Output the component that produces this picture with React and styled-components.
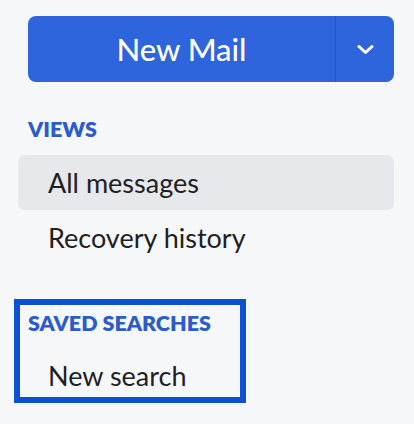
import React from 'react'
import styled, { createGlobalStyle } from 'styled-components'

const GlobalStyle = createGlobalStyle`
  html, body {
    margin: 0;
    padding: 0;
    background: #f6f7f9;
  }
  body {
    font-family: Lato, "Noto Sans", "Liberation Sans", sans-serif;
    color: #1f1f24;
  }
`

const Sidebar = styled.nav`
  display: flex;
  flex-direction: column;
  padding: 16px 20px 0 28px;
  width: 414px;
  box-sizing: border-box;
`

const SplitButton = styled.div`
  display: flex;
  height: 66px;
  border-radius: 8px;
  background: #2e65dd;
  overflow: hidden;
`

const MainAction = styled.button`
  flex: 1;
  border: none;
  background: transparent;
  color: #fff;
  font-family: inherit;
  font-size: 31px;
  font-weight: 500;
  padding: 0;
  cursor: pointer;
`

const DropAction = styled.button`
  width: 59px;
  border: none;
  border-left: 1px solid #2553bd;
  background: transparent;
  display: flex;
  align-items: center;
  justify-content: center;
  padding: 0;
  cursor: pointer;
`

const SectionTitle = styled.h2`
  margin: ${p => p.$top || 0}px 0 14px;
  font-size: 21.5px;
  line-height: 24px;
  font-weight: 800;
  color: #2a5cca;
  letter-spacing: 0;
`

const List = styled.ul`
  list-style: none;
  margin: 0 0 0 -10px;
  padding: 0;
  display: flex;
  flex-direction: column;
`

const Item = styled.li`
  height: 55px;
  line-height: 55px;
  padding-left: 30px;
  font-size: 27px;
  border-radius: 7px;
  background: ${p => (p.$active ? '#e7e8eb' : 'transparent')};
  white-space: nowrap;
`

const SavedBox = styled.section`
  margin: 34px 0 0 -14px;
  width: 232px;
  box-sizing: border-box;
  border: 6px solid #0a52d1;
  padding: 6px 0 4px 8px;
`

const SavedItem = styled.div`
  margin-top: 24px;
  padding-left: 20px;
  font-size: 27px;
  line-height: 34px;
`

const Chevron = () => (
  <svg width="17" height="11" viewBox="0 0 17 11" fill="none">
    <path d="M2 2.5l6.5 6 6.5-6" stroke="#fff" strokeWidth="3" strokeLinecap="round" strokeLinejoin="round" />
  </svg>
)

export default function App() {
  return (
    <>
      <GlobalStyle />
      <Sidebar>
        <SplitButton>
          <MainAction>New Mail</MainAction>
          <DropAction aria-label="More">
            <Chevron />
          </DropAction>
        </SplitButton>

        <SectionTitle $top={35}>VIEWS</SectionTitle>
        <List>
          <Item $active>All messages</Item>
          <Item>Recovery history</Item>
        </List>

        <SavedBox>
          <SectionTitle>SAVED SEARCHES</SectionTitle>
          <SavedItem>New search</SavedItem>
        </SavedBox>
      </Sidebar>
    </>
  )
}
